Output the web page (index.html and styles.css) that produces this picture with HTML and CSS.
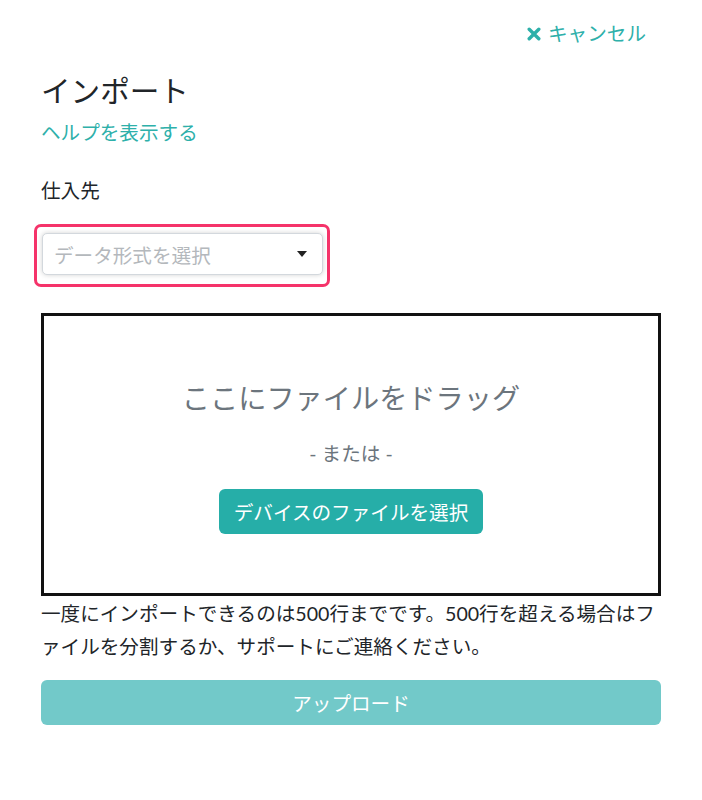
FILE: index.html
```html
<!DOCTYPE html>
<html lang="ja">
<head>
<meta charset="utf-8">
<title>インポート</title>
<link rel="stylesheet" href="styles.css">
</head>
<body>
<div class="page">
  <div class="header">
    <a class="cancel" href="#">
      <svg class="cancel-icon" viewBox="0 0 14 14" width="14" height="14" aria-hidden="true">
        <path d="M2.2 2.2 L11.8 11.8 M11.8 2.2 L2.2 11.8" stroke="currentColor" stroke-width="3.4" stroke-linecap="round"/>
      </svg>
      <span>キャンセル</span>
    </a>
  </div>
  <h1 class="title">インポート</h1>
  <a class="help" href="#">ヘルプを表示する</a>
  <div class="label">仕入先</div>
  <div class="highlight">
    <div class="select">
      <span class="placeholder">データ形式を選択</span>
      <span class="caret"></span>
    </div>
  </div>
  <div class="dropzone">
    <div class="drop-title">ここにファイルをドラッグ</div>
    <div class="or">- または -</div>
    <button class="pick">デバイスのファイルを選択</button>
  </div>
  <p class="note">一度にインポートできるのは500行までです。500行を超える場合はファイルを分割するか、サポートにご連絡ください。</p>
  <button class="upload">アップロード</button>
</div>
</body>
</html>
```
FILE: styles.css
```css
html, body {
  margin: 0;
  padding: 0;
  background: #fff;
}
body {
  font-family: Lato, "Noto Sans CJK JP", sans-serif;
  color: #212529;
}
.page {
  padding: 0 41px;
  display: flex;
  flex-direction: column;
  align-items: flex-start;
}
.header {
  align-self: stretch;
  display: flex;
  justify-content: flex-end;
  padding-top: 20px;
  padding-right: 15px;
}
.cancel {
  display: flex;
  align-items: center;
  gap: 7px;
  color: #2eb0aa;
  text-decoration: none;
  font-size: 19.6px;
  line-height: 28px;
}
.cancel-icon {
  display: block;
}
.title {
  margin: 25px 0 0;
  font-size: 29.6px;
  font-weight: 400;
  line-height: 36px;
  color: #212529;
}
.help {
  margin-top: 9px;
  font-size: 19.6px;
  line-height: 30px;
  color: #2eb0aa;
  text-decoration: none;
}
.label {
  margin-top: 28px;
  font-size: 19.6px;
  line-height: 30px;
  color: #212529;
}
.highlight {
  margin-top: 18px;
  margin-left: -7px;
  border: 3px solid #f5336a;
  border-radius: 7px;
  padding: 6px 4px 9px 5px;
}
.select {
  box-sizing: border-box;
  width: 281px;
  height: 42px;
  border: 1px solid #d3d8dd;
  border-radius: 5px;
  box-shadow: 0 0 5px rgba(0, 0, 0, 0.18);
  display: flex;
  align-items: center;
  justify-content: space-between;
  padding: 0 15px 0 11px;
  background: #fff;
}
.placeholder {
  font-size: 19.6px;
  color: #b4b8bc;
}
.caret {
  width: 0;
  height: 0;
  border-left: 5px solid transparent;
  border-right: 5px solid transparent;
  border-top: 6px solid #222;
}
.dropzone {
  box-sizing: border-box;
  align-self: stretch;
  margin-top: 26px;
  height: 283px;
  border: 3px solid #111;
  display: flex;
  flex-direction: column;
  align-items: center;
  padding-top: 62px;
}
.drop-title {
  font-size: 28.2px;
  line-height: 40px;
  color: #6c757d;
}
.or {
  margin-top: 21px;
  font-size: 19.6px;
  line-height: 30px;
  color: #6c757d;
}
.pick {
  margin-top: 20px;
  height: 45px;
  padding: 0 15px;
  border: none;
  border-radius: 6px;
  background: #26aea8;
  color: #fff;
  font-family: inherit;
  font-size: 19.6px;
}
.note {
  margin: 1px 0 0;
  font-size: 19.6px;
  line-height: 33px;
  color: #212529;
  line-break: loose;
}
.upload {
  align-self: stretch;
  margin-top: 17px;
  height: 45px;
  border: none;
  border-radius: 6px;
  background: #72c9c9;
  color: #fff;
  font-family: inherit;
  font-size: 19.6px;
}
```
